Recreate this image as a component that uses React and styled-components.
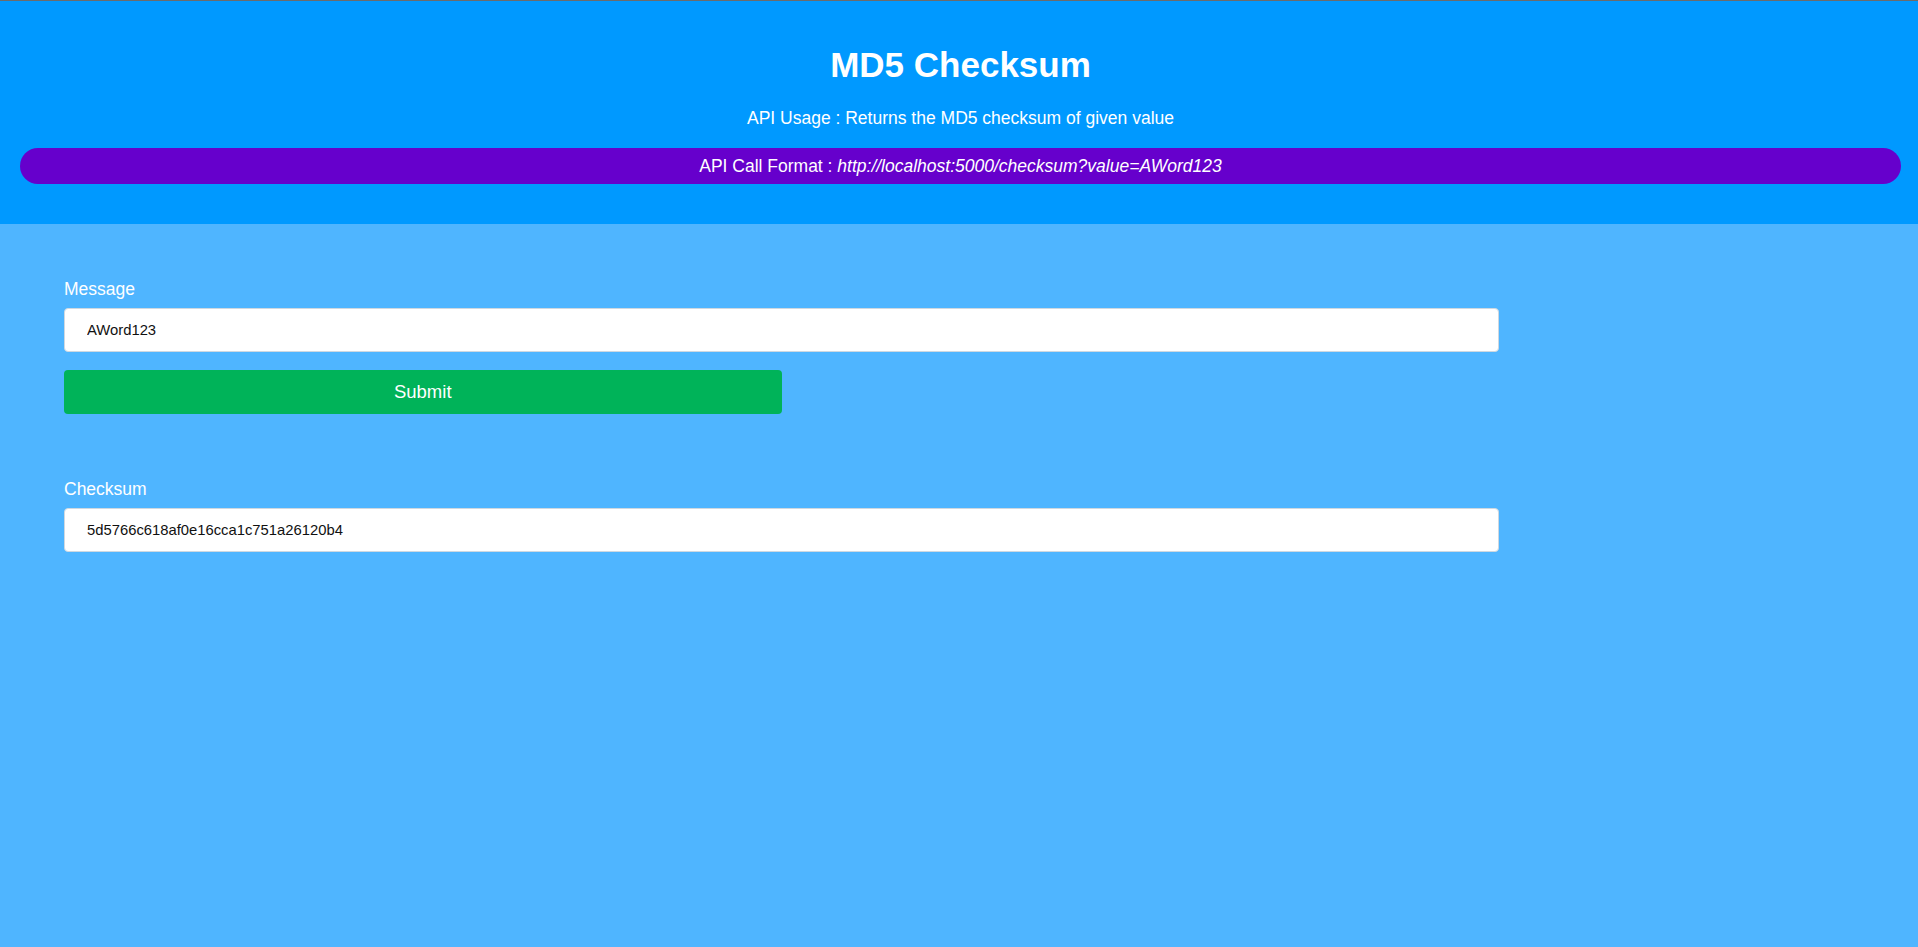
import React, { useState } from "react";
import styled, { createGlobalStyle } from "styled-components";

const GlobalStyle = createGlobalStyle`
  html, body {
    margin: 0;
    padding: 0;
    background: #4fb5ff;
    font-family: "Liberation Sans", Arial, sans-serif;
  }

  * {
    box-sizing: border-box;
  }
`;

const Page = styled.div`
  min-height: 100vh;
  border-top: 1px solid #6b6b6b;
  background: #4fb5ff;
`;

const Header = styled.header`
  display: flex;
  flex-direction: column;
  align-items: center;
  background: #0099ff;
  padding: 44px 17px 40px 20px;
  color: white;
`;

const Title = styled.h1`
  margin: 0;
  font-size: 35px;
  line-height: 40px;
  font-weight: bold;
`;

const Usage = styled.p`
  margin: 23px 0 20px;
  font-size: 17.5px;
  line-height: 20px;
`;

const CallFormat = styled.div`
  width: 100%;
  height: 36px;
  line-height: 35px;
  padding-top: 1px;
  border-radius: 18px;
  background: #6600cc;
  text-align: center;
  font-size: 17.5px;

  em {
    font-style: italic;
  }
`;

const Main = styled.main`
  padding: 55px 64px;
`;

const Form = styled.form`
  display: flex;
  flex-direction: column;
  max-width: 1435px;
  margin-bottom: 65px;
`;

const Label = styled.label`
  color: white;
  font-size: 17.5px;
  line-height: 20px;
  margin-bottom: 9px;
`;

const Input = styled.input`
  width: 100%;
  height: 44px;
  padding: 0 22px;
  border: 1px solid #cfd8e0;
  border-radius: 4px;
  background: white;
  font-family: "Liberation Sans", Arial, sans-serif;
  font-size: 14.8px;
  color: #111;
  outline: none;
`;

const Button = styled.button`
  width: 50%;
  height: 44px;
  margin-top: 18px;
  border: none;
  border-radius: 4px;
  background: #00b359;
  color: white;
  font-family: "Liberation Sans", Arial, sans-serif;
  font-size: 18.5px;
  cursor: pointer;

  &:hover {
    background: #00a352;
  }
`;

const App = () => {
  const [message, setMessage] = useState("AWord123");
  const [checksum] = useState("5d5766c618af0e16cca1c751a26120b4");

  const handleSubmit = (e) => {
    e.preventDefault();
  };

  return (
    <Page>
      <GlobalStyle />
      <Header>
        <Title>MD5 Checksum</Title>
        <Usage>API Usage : Returns the MD5 checksum of given value</Usage>
        <CallFormat>
          API Call Format : <em>http://localhost:5000/checksum?value=AWord123</em>
        </CallFormat>
      </Header>
      <Main>
        <Form onSubmit={handleSubmit}>
          <Label htmlFor="message">Message</Label>
          <Input
            id="message"
            type="text"
            value={message}
            onChange={(e) => setMessage(e.target.value)}
          />
          <Button type="submit">Submit</Button>
        </Form>
        <Form as="div">
          <Label htmlFor="checksum">Checksum</Label>
          <Input id="checksum" type="text" value={checksum} readOnly />
        </Form>
      </Main>
    </Page>
  );
};

export default App;
